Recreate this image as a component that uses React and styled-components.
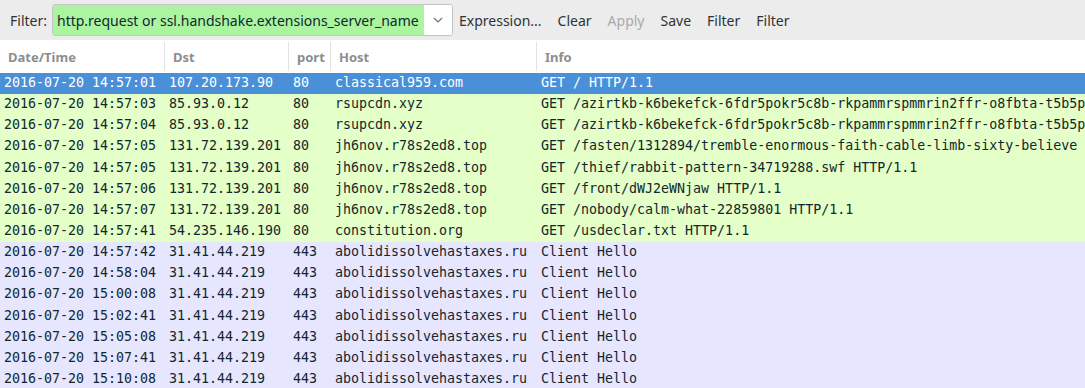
import React from 'react';
import styled, { createGlobalStyle } from 'styled-components';

const Global = createGlobalStyle`
  html, body { margin: 0; padding: 0; background: #ffffff; }
  body { width: 1085px; height: 388px; overflow: hidden; }
`;

const Page = styled.div`
  width: 1085px;
  height: 388px;
  overflow: hidden;
  font-family: "Noto Sans", "DejaVu Sans", sans-serif;
`;

const Toolbar = styled.div`
  height: 40px;
  background: #ececec;
  display: flex;
  align-items: center;
  padding-left: 10px;
  font-size: 14px;
  color: #2e3436;
`;

const Label = styled.span`
  margin-right: 5px;
  color: #2e3436;
`;

const FilterBox = styled.div`
  display: flex;
  height: 30px;
  width: 399px;
  border: 1px solid #c3c3c3;
  border-radius: 3px;
  overflow: hidden;
  margin-right: 6px;
`;

const FilterInput = styled.div`
  flex: 1;
  background: #abf5a1;
  display: flex;
  align-items: center;
  padding-left: 4px;
  color: #12272e;
  white-space: nowrap;
  overflow: hidden;
`;

const DropButton = styled.div`
  width: 28px;
  background: #ffffff;
  border-left: 1px solid #d6d6d6;
  display: flex;
  align-items: center;
  justify-content: center;
`;

const ToolButton = styled.span`
  margin-right: 16px;
  color: ${p => (p.disabled ? '#a8abaa' : '#2e3436')};
`;

const Table = styled.div`
  font-family: "DejaVu Sans Mono", monospace;
  font-size: 13.3px;
`;

const HeaderRow = styled.div`
  display: grid;
  grid-template-columns: 164px 124px 42px 206px 1fr;
  height: 33px;
  background: #ffffff;
  font-family: "Noto Sans", "DejaVu Sans", sans-serif;
  font-weight: bold;
  font-size: 13px;
  color: #8b8e8f;
`;

const HeaderCell = styled.div`
  display: flex;
  align-items: center;
  padding-left: 8px;
  border-left: ${p => (p.first ? 'none' : '1px solid #e2e2e2')};
  overflow: hidden;
  white-space: nowrap;
  margin: 2px 0;
`;

const Row = styled.div`
  display: grid;
  grid-template-columns: 164px 124px 42px 206px 1fr;
  height: 21.15px;
  line-height: 17px;
  padding-bottom: 2px;
  box-sizing: border-box;
  align-items: center;
  background: ${p => p.bg};
  color: ${p => (p.selected ? '#ffffff' : '#12272e')};
  white-space: nowrap;
`;

const Cell = styled.div`
  padding-left: ${p => p.pad || 5}px;
  overflow: hidden;
`;

const colors = {
  sel: '#4a90d9',
  http: '#e4ffc7',
  tcp: '#e7e6ff',
};

const longPath = '/azirtkb-k6bekefck-6fdr5pokr5c8b-rkpammrspmmrin2ffr-o8fbta-t5b5p8c-a3f HTTP/1.1';

const rows = [
  ['2016-07-20 14:57:01', '107.20.173.90', '80', 'classical959.com', 'GET / HTTP/1.1', 'sel'],
  ['2016-07-20 14:57:03', '85.93.0.12', '80', 'rsupcdn.xyz', 'GET ' + longPath, 'http'],
  ['2016-07-20 14:57:04', '85.93.0.12', '80', 'rsupcdn.xyz', 'GET ' + longPath, 'http'],
  ['2016-07-20 14:57:05', '131.72.139.201', '80', 'jh6nov.r78s2ed8.top', 'GET /fasten/1312894/tremble-enormous-faith-cable-limb-sixty-believe HTTP/1.1', 'http'],
  ['2016-07-20 14:57:05', '131.72.139.201', '80', 'jh6nov.r78s2ed8.top', 'GET /thief/rabbit-pattern-34719288.swf HTTP/1.1', 'http'],
  ['2016-07-20 14:57:06', '131.72.139.201', '80', 'jh6nov.r78s2ed8.top', 'GET /front/dWJ2eWNjaw HTTP/1.1', 'http'],
  ['2016-07-20 14:57:07', '131.72.139.201', '80', 'jh6nov.r78s2ed8.top', 'GET /nobody/calm-what-22859801 HTTP/1.1', 'http'],
  ['2016-07-20 14:57:41', '54.235.146.190', '80', 'constitution.org', 'GET /usdeclar.txt HTTP/1.1', 'http'],
  ['2016-07-20 14:57:42', '31.41.44.219', '443', 'abolidissolvehastaxes.ru', 'Client Hello', 'tcp'],
  ['2016-07-20 14:58:04', '31.41.44.219', '443', 'abolidissolvehastaxes.ru', 'Client Hello', 'tcp'],
  ['2016-07-20 15:00:08', '31.41.44.219', '443', 'abolidissolvehastaxes.ru', 'Client Hello', 'tcp'],
  ['2016-07-20 15:02:41', '31.41.44.219', '443', 'abolidissolvehastaxes.ru', 'Client Hello', 'tcp'],
  ['2016-07-20 15:05:08', '31.41.44.219', '443', 'abolidissolvehastaxes.ru', 'Client Hello', 'tcp'],
  ['2016-07-20 15:07:41', '31.41.44.219', '443', 'abolidissolvehastaxes.ru', 'Client Hello', 'tcp'],
  ['2016-07-20 15:10:08', '31.41.44.219', '443', 'abolidissolvehastaxes.ru', 'Client Hello', 'tcp'],
];

const Chevron = () => (
  <svg width="10" height="6" viewBox="0 0 10 6">
    <path d="M1 1 L5 5 L9 1" fill="none" stroke="#6f7375" strokeWidth="1.2" />
  </svg>
);

export default function App() {
  return (
    <Page>
      <Global />
      <Toolbar>
        <Label>Filter:</Label>
        <FilterBox>
          <FilterInput>http.request or ssl.handshake.extensions_server_name</FilterInput>
          <DropButton><Chevron /></DropButton>
        </FilterBox>
        <ToolButton>Expression...</ToolButton>
        <ToolButton>Clear</ToolButton>
        <ToolButton disabled>Apply</ToolButton>
        <ToolButton>Save</ToolButton>
        <ToolButton>Filter</ToolButton>
        <ToolButton>Filter</ToolButton>
      </Toolbar>
      <Table>
        <HeaderRow>
          <HeaderCell first>Date/Time</HeaderCell>
          <HeaderCell>Dst</HeaderCell>
          <HeaderCell>port</HeaderCell>
          <HeaderCell>Host</HeaderCell>
          <HeaderCell>Info</HeaderCell>
        </HeaderRow>
        {rows.map((r, i) => (
          <Row key={i} bg={colors[r[5]]} selected={r[5] === 'sel'}>
            <Cell pad={4}>{r[0]}</Cell>
            <Cell>{r[1]}</Cell>
            <Cell>{r[2]}</Cell>
            <Cell>{r[3]}</Cell>
            <Cell>{r[4]}</Cell>
          </Row>
        ))}
      </Table>
    </Page>
  );
}
